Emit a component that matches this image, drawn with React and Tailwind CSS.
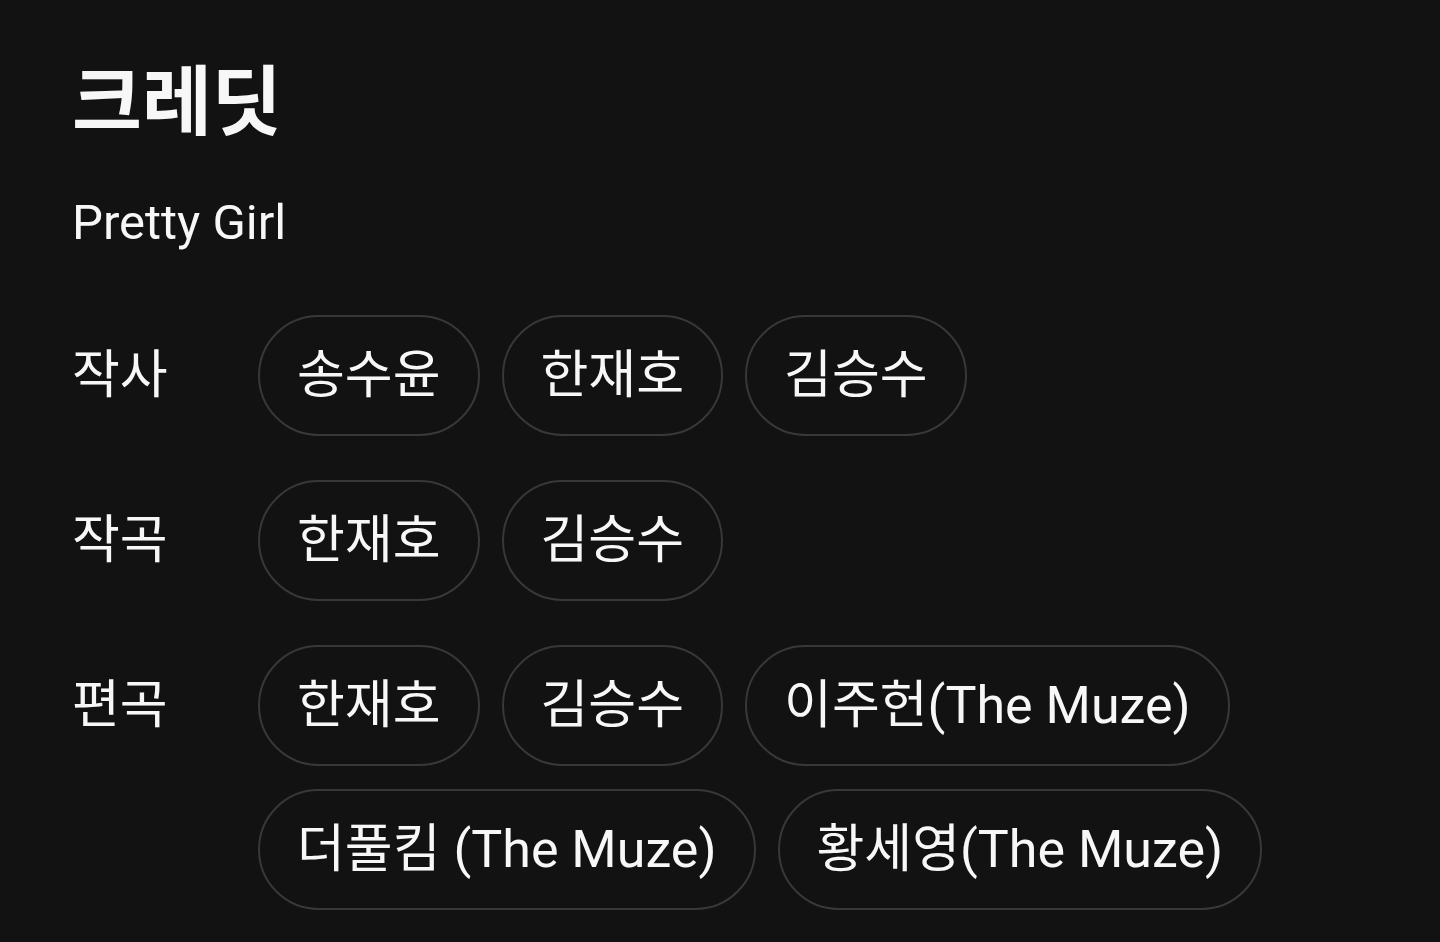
import React from "react";

const rows = [
  { label: "작사", names: ["송수윤", "한재호", "김승수"] },
  { label: "작곡", names: ["한재호", "김승수"] },
  { label: "편곡", names: ["한재호", "김승수", "이주헌(The Muze)", "더풀킴 (The Muze)", "황세영(The Muze)"] },
];

export default function App() {
  return (
    <div
      className="min-h-[942px] w-[1440px] bg-[#121212] text-[#f7f7f7] pl-[72px] pt-[58px]"
      style={{ fontFamily: '"Roboto", "Noto Sans CJK KR", sans-serif' }}
    >
      <h1 className="text-[76px] font-bold leading-[90px]">크레딧</h1>
      <div className="mt-[45px] text-[49px] leading-[60px]">Pretty Girl</div>
      <div className="mt-[62px] flex flex-col gap-[44px]">
        {rows.map((r) => (
          <div key={r.label} className="flex items-start">
            <div className="w-[186px] shrink-0 h-[121px] flex items-center text-[52px] leading-none">
              {r.label}
            </div>
            <div className="flex flex-wrap gap-x-[22px] gap-y-[23px] w-[1100px]">
              {r.names.map((n, i) => (
                <div
                  key={i}
                  className="h-[121px] px-[37px] flex items-center justify-center rounded-full border-2 border-[#383838] text-[52px] leading-none whitespace-nowrap"
                >
                  <span>{n}</span>
                </div>
              ))}
            </div>
          </div>
        ))}
      </div>
    </div>
  );
}
